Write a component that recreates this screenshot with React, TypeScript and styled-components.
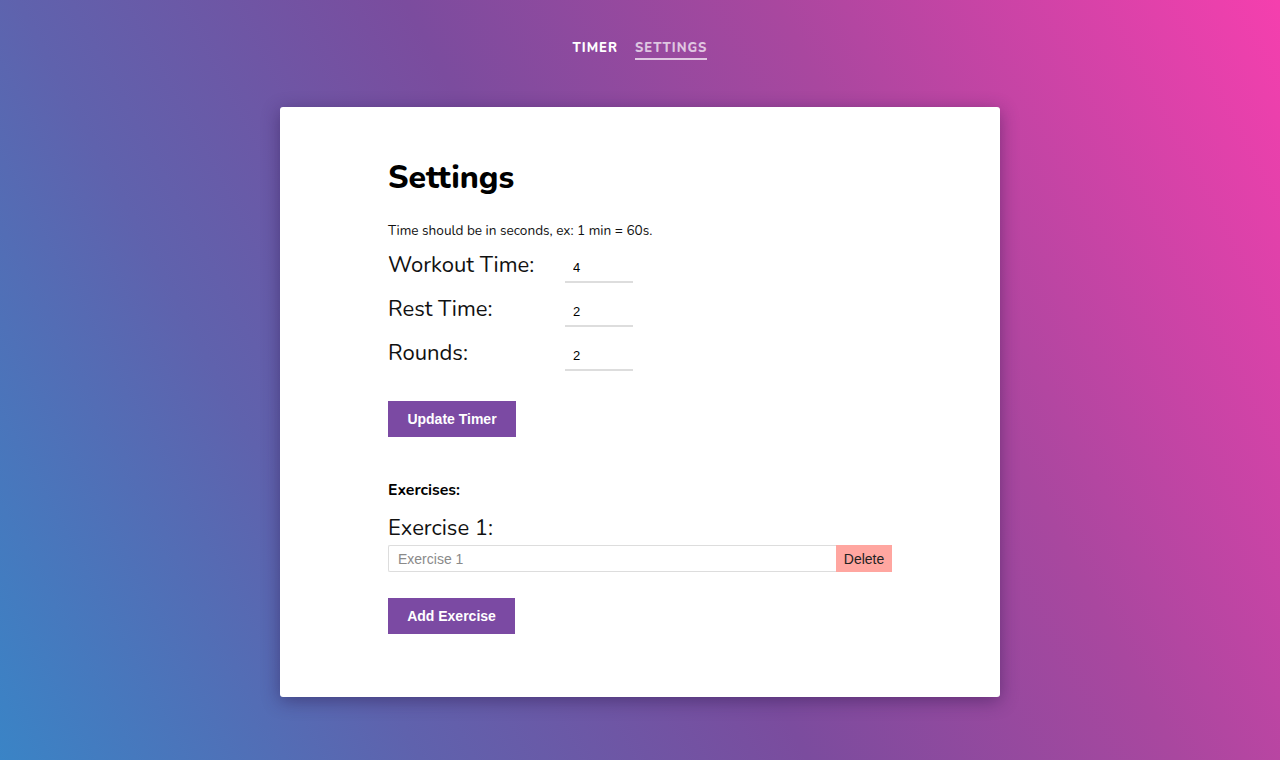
import React from "react";
import styled, { createGlobalStyle } from "styled-components";

const Global = createGlobalStyle`
  html, body { margin: 0; padding: 0; }
  body {
    width: 1280px;
    height: 760px;
    overflow: hidden;
    font-family: "Nunito", "Lato", "Open Sans", sans-serif;
    background: linear-gradient(62deg, #3a84c6 0%, #5f62ad 25%, #7b4c9e 48%, #a9479f 70%, #f53fae 100%);
  }
`;

const Page = styled.div`
  width: 1280px;
  height: 760px;
  display: flex;
  flex-direction: column;
  align-items: center;
`;

const Nav = styled.nav`
  display: flex;
  gap: 17px;
  margin-top: 40px;
  height: 20px;
`;

const NavLink = styled.a<{ $active?: boolean }>`
  font-family: "Nunito", "Lato", sans-serif;
  font-weight: 800;
  font-size: 13px;
  letter-spacing: 1px;
  line-height: 16px;
  padding-bottom: 1px;
  color: ${(p) => (p.$active ? "rgba(255,255,255,0.7)" : "#fff")};
  border-bottom: 2px solid ${(p) => (p.$active ? "rgba(255,255,255,0.7)" : "transparent")};
  text-decoration: none;
  cursor: pointer;
`;

const Card = styled.main`
  margin-top: 47px;
  width: 720px;
  height: 590px;
  box-sizing: border-box;
  background: #fff;
  border-radius: 3px;
  box-shadow: 0 4px 18px rgba(40, 20, 70, 0.45);
  padding: 51px 108px 0;
  color: #111;
`;

const Title = styled.h1`
  margin: 0;
  font-size: 32px;
  font-weight: 800;
  line-height: 40px;
  color: #000;
`;

const Hint = styled.p`
  margin: 25px 0 0;
  font-size: 13.6px;
  line-height: 16px;
`;

const Fields = styled.div`
  display: flex;
  flex-direction: column;
  gap: 12px;
  margin-top: 12px;
`;

const Row = styled.label`
  display: flex;
  align-items: flex-end;
  height: 32px;
`;

const FieldLabel = styled.span`
  width: 177px;
  font-size: 22px;
  line-height: 28px;
  align-self: flex-start;
  color: #111;
`;

const NumInput = styled.input`
  width: 68px;
  height: 30px;
  box-sizing: border-box;
  border: none;
  border-bottom: 2px solid #ddd;
  padding: 0 0 0 8px;
  font-family: "Liberation Sans", Arial, sans-serif;
  font-size: 13px;
  color: #000;
  outline: none;
  background: transparent;
`;

const PrimaryButton = styled.button`
  display: block;
  height: 36px;
  padding: 0;
  border: none;
  background: #7b4aa3;
  color: #fff;
  font-family: "Liberation Sans", Arial, sans-serif;
  font-weight: 700;
  font-size: 14px;
  white-space: nowrap;
  text-align: center;
  cursor: pointer;
`;

const UpdateButton = styled(PrimaryButton)`
  margin-top: 30px;
  width: 128px;
`;

const SubTitle = styled.h3`
  margin: 44px 0 0;
  font-size: 15.8px;
  font-weight: 700;
  line-height: 18px;
  color: #000;
`;

const ExerciseLabel = styled.div`
  margin-top: 17px;
  font-size: 22px;
  line-height: 24px;
`;

const ExerciseRow = styled.div`
  display: flex;
  margin-top: 5px;
  width: 504px;
  height: 27px;
`;

const TextInput = styled.input`
  flex: 1;
  box-sizing: border-box;
  height: 27px;
  border: 1px solid #ddd;
  border-right: none;
  border-radius: 2px 0 0 2px;
  padding: 0 9px;
  font-family: "Liberation Sans", Arial, sans-serif;
  font-size: 14px;
  color: #333;
  outline: none;
  &::placeholder { color: #8a8a8a; }
`;

const DeleteButton = styled.button`
  width: 56px;
  height: 27px;
  border: none;
  background: #ffa6a0;
  color: #222;
  font-family: "Liberation Sans", Arial, sans-serif;
  font-size: 14px;
  padding: 0;
  cursor: pointer;
`;

const AddButton = styled(PrimaryButton)`
  margin-top: 26px;
  width: 127px;
`;

export default function App() {
  return (
    <>
      <Global />
      <Page>
        <Nav>
          <NavLink>TIMER</NavLink>
          <NavLink $active>SETTINGS</NavLink>
        </Nav>
        <Card>
          <Title>Settings</Title>
          <Hint>Time should be in seconds, ex: 1 min = 60s.</Hint>
          <Fields>
            <Row>
              <FieldLabel>Workout Time:</FieldLabel>
              <NumInput defaultValue="4" />
            </Row>
            <Row>
              <FieldLabel>Rest Time:</FieldLabel>
              <NumInput defaultValue="2" />
            </Row>
            <Row>
              <FieldLabel>Rounds:</FieldLabel>
              <NumInput defaultValue="2" />
            </Row>
          </Fields>
          <UpdateButton>Update Timer</UpdateButton>
          <SubTitle>Exercises:</SubTitle>
          <ExerciseLabel>Exercise 1:</ExerciseLabel>
          <ExerciseRow>
            <TextInput placeholder="Exercise 1" />
            <DeleteButton>Delete</DeleteButton>
          </ExerciseRow>
          <AddButton>Add Exercise</AddButton>
        </Card>
      </Page>
    </>
  );
}
